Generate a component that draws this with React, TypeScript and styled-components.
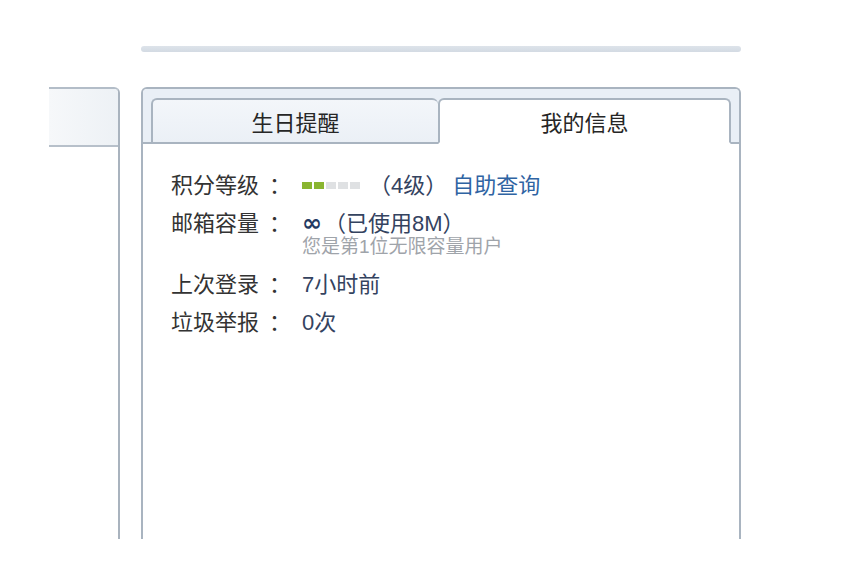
import styled, { createGlobalStyle } from "styled-components";

const GlobalStyle = createGlobalStyle`
  html, body {
    margin: 0;
    padding: 0;
    background: #ffffff;
  }
  body {
    font-family: "Liberation Sans", "Noto Sans CJK SC", sans-serif;
  }
`;

const Page = styled.div`
  display: flex;
  align-items: flex-start;
  width: 851px;
  height: 576px;
  overflow: hidden;
`;

const SidePanel = styled.div`
  margin: 87px 0 0 49px;
  width: 71px;
  height: 452px;
  border-top: 2px solid #b3bdc8;
  border-right: 2px solid #a9b3be;
  border-top-right-radius: 6px;
  box-sizing: border-box;
`;

const SideHeader = styled.div`
  height: 56px;
  background: linear-gradient(to right, #f6f8fa, #edf1f5);
  border-bottom: 2px solid #b7c0ca;
  border-top-right-radius: 4px;
`;

const MainColumn = styled.div`
  display: flex;
  flex-direction: column;
  margin-left: 21px;
  padding-top: 46px;
  width: 600px;
`;

const TopBar = styled.div`
  height: 6px;
  border-radius: 3px;
  background: linear-gradient(to bottom, #dde3ea, #d3dae3);
  margin-bottom: 35px;
`;

const Panel = styled.div`
  height: 452px;
  border: 2px solid #a9b4c0;
  border-bottom: none;
  border-radius: 6px 6px 0 0;
  box-sizing: border-box;
  display: flex;
  flex-direction: column;
  overflow: hidden;
`;

const TabStrip = styled.div`
  display: flex;
  padding: 9px 8px 0;
  background: #e9eff6;
  border-bottom: 2px solid #a9b4c0;
`;

const Tab = styled.div<{ $active?: boolean }>`
  flex: ${(p) => (p.$active ? "0 0 293px" : "0 0 287px")};
  height: 46px;
  margin-bottom: -2px;
  box-sizing: border-box;
  display: flex;
  align-items: center;
  justify-content: center;
  font-size: 22px;
  color: #262626;
  border: 2px solid #a9b4c0;
  border-bottom-color: ${(p) => (p.$active ? "#ffffff" : "#a9b4c0")};
  border-right-width: ${(p) => (p.$active ? "2px" : "0")};
  border-radius: 6px 6px 0 0;
  background: ${(p) =>
    p.$active ? "#ffffff" : "linear-gradient(to bottom, #f3f6fa, #ebf0f6)"};
`;

const Content = styled.div`
  flex: 1;
  background: #ffffff;
  padding: 30px 0 0 28px;
  display: flex;
  flex-direction: column;
  gap: 15px;
  font-size: 22px;
  line-height: 23px;
`;

const Row = styled.div`
  display: flex;
`;

const Label = styled.div`
  width: 131px;
  flex: none;
  color: #333333;
`;

const Colon = styled.span`
  margin-left: 10px;
`;

const Value = styled.div`
  display: flex;
  flex-direction: column;
  color: #34435f;
`;

const Line = styled.div`
  display: flex;
  align-items: center;
`;

const Note = styled.div`
  font-size: 19px;
  color: #9fa4aa;
`;

const Link = styled.a`
  color: #2f64a3;
  text-decoration: none;
  margin-left: 5px;
`;

const Level = styled.span`
  display: inline-flex;
  gap: 2px;
  margin-right: 9px;
`;

const Pip = styled.i<{ $on?: boolean }>`
  display: block;
  width: 10px;
  height: 7px;
  background: ${(p) => (p.$on ? "#8ab530" : "#dfe1e3")};
`;

const Infinity = styled.span`
  font-family: "DejaVu Sans", sans-serif;
  font-weight: bold;
  font-size: 24px;
  line-height: 23px;
  color: #243a62;
  margin-right: 2px;
`;

export default function App() {
  const level = 2;
  return (
    <Page>
      <GlobalStyle />
      <SidePanel>
        <SideHeader />
      </SidePanel>
      <MainColumn>
        <TopBar />
        <Panel>
          <TabStrip>
            <Tab>生日提醒</Tab>
            <Tab $active>我的信息</Tab>
          </TabStrip>
          <Content>
            <Row>
              <Label>
                积分等级<Colon>：</Colon>
              </Label>
              <Value>
                <Line>
                  <Level>
                    {[0, 1, 2, 3, 4].map((i) => (
                      <Pip key={i} $on={i < level} />
                    ))}
                  </Level>
                  （4级）
                  <Link href="#">自助查询</Link>
                </Line>
              </Value>
            </Row>
            <Row>
              <Label>
                邮箱容量<Colon>：</Colon>
              </Label>
              <Value>
                <Line>
                  <Infinity>∞</Infinity>（已使用8M）
                </Line>
                <Note>您是第1位无限容量用户</Note>
              </Value>
            </Row>
            <Row>
              <Label>
                上次登录<Colon>：</Colon>
              </Label>
              <Value>7小时前</Value>
            </Row>
            <Row>
              <Label>
                垃圾举报<Colon>：</Colon>
              </Label>
              <Value>0次</Value>
            </Row>
          </Content>
        </Panel>
      </MainColumn>
    </Page>
  );
}
